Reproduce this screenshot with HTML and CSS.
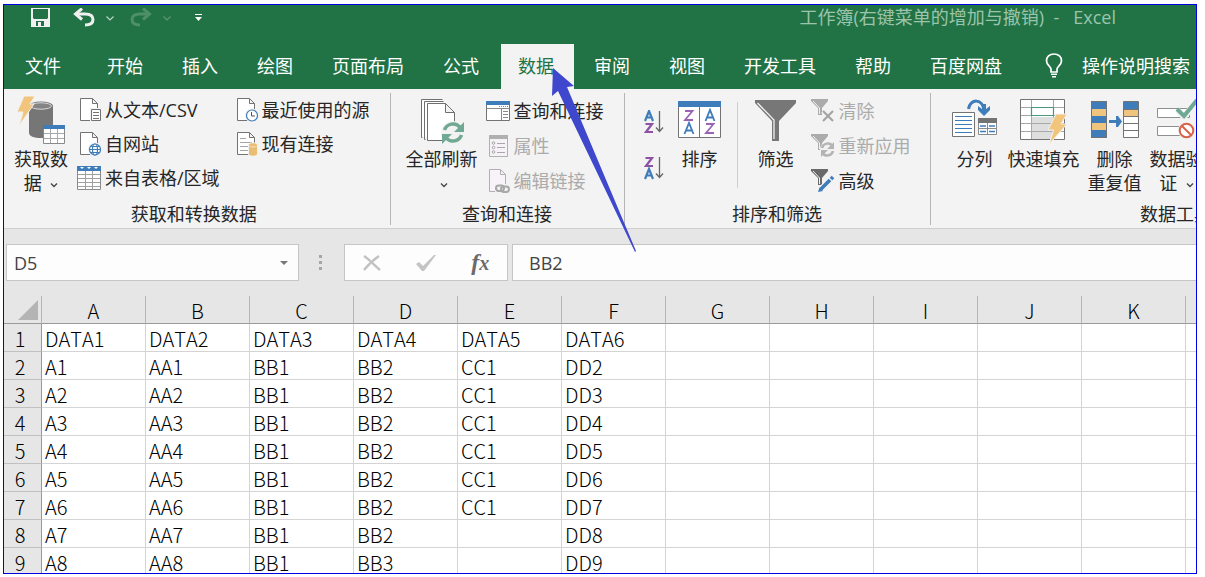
FILE: index.html
```html
<!DOCTYPE html>
<html lang="zh-CN">
<head>
<meta charset="utf-8">
<title>工作簿(右键菜单的增加与撤销) - Excel</title>
<link rel="stylesheet" href="styles.css">
</head>
<body>
<div class="window">
  <header class="top">
    <div class="titlebar">
      <button class="qa save" aria-label="保存"><svg width="20" height="20" viewBox="0 0 20 20"><path fill="#f0f0f0" fill-rule="evenodd" d="M0 0h19v19H0zM2 1v9l1 1h13l1-1V1zM5 13v5h2v-4h3v4h3v-5z"/></svg></button>
      <button class="qa undo" aria-label="撤销"><svg width="22" height="20" viewBox="0 0 22 20"><path fill="none" stroke="#f0f0f0" stroke-width="3" d="M3 6h9c5 0 8 2 8 5.500S17 17 12 17"/><path fill="none" stroke="#f0f0f0" stroke-width="3" d="M9 0.500L2.500 6 9 11.500"/></svg></button>
      <button class="qa chev" aria-label="撤销列表"><svg width="8" height="5" viewBox="0 0 8 5"><path fill="none" stroke="#b9d3c4" stroke-width="1.200" d="M.5.500L4 4 7.500.500"/></svg></button>
      <button class="qa redo" aria-label="恢复"><svg width="22" height="20" viewBox="0 0 22 20"><g fill="none" stroke="#4e8f69" stroke-width="3"><path d="M19 6h-9c-5 0-8 2-8 5.500S5 17 10 17"/><path d="M13 .5L19.500 6 13 11.500"/></g></svg></button>
      <button class="qa chev" aria-label="恢复列表"><svg width="8" height="5" viewBox="0 0 8 5"><path fill="none" stroke="#5b9875" stroke-width="1.200" d="M.5.500L4 4 7.500.500"/></svg></button>
      <button class="qa custom" aria-label="自定义快速访问工具栏"><svg width="8" height="8" viewBox="0 0 8 8"><path fill="#fff" d="M0 0h7v1H0zM0 3h7L3.500 7z"/></svg></button>
      <span class="title">工作簿(右键菜单的增加与撤销)&nbsp; -&nbsp;&nbsp; Excel</span>
    </div>
    <nav class="tabs">
      <button class="tab file">文件</button>
      <button class="tab">开始</button>
      <button class="tab">插入</button>
      <button class="tab">绘图</button>
      <button class="tab">页面布局</button>
      <button class="tab">公式</button>
      <button class="tab active">数据</button>
      <button class="tab">审阅</button>
      <button class="tab">视图</button>
      <button class="tab">开发工具</button>
      <button class="tab">帮助</button>
      <button class="tab">百度网盘</button>
      <button class="tell"><svg width="18" height="25" viewBox="0 0 18 25"><path fill="none" stroke="#fff" stroke-width="1.700" d="M6 19v-3C5.500 13 1.500 12 1.500 7.700 1.500 4 4.500 1 9 1s7.500 3 7.500 6.700c0 4.300-4 5.300-4.500 8.300v3z"/><path fill="#fff" d="M6 20.500h6V22H6zM7 23h4v1.500H7z"/></svg>操作说明搜索</button>
    </nav>
  </header>

  <section class="ribbon">
    <div class="group g-get">
      <div class="tools">
        <button class="big"><span class="pic"><svg width="48" height="48" viewBox="0 0 48 48"><path fill="#767676" d="M12 10v27c0 3 5 5 12 5s12-2 12-5V10z"/><ellipse cx="24" cy="10" rx="12" ry="4.500" fill="#767676"/><ellipse cx="24" cy="10" rx="10.500" ry="3.200" fill="#848484" stroke="#d8d8d8"/><path fill="#f2c57c" stroke="#f2f2f2" d="M7 0h11l-5 8h4L2 30l4-14H0z"/><path fill="#fff" stroke="#8a8a8a" d="M26.500 29.500h21v18h-21z"/><path fill="#3f7cba" d="M26 29h22v4H26z"/><path stroke="#a8a8a8" d="M33.500 33v14M40.500 33v14M27 37.500h20M27 42.500h20"/></svg></span>获取数<br>据 <svg class="dn" width="8" height="5" viewBox="0 0 8 5"><path d="M1 .5l3 3 3-3"/></svg></button>
        <div class="stack">
          <button class="small"><svg width="24" height="24" viewBox="0 0 24 24"><path fill="#fff" stroke="#737373" d="M3.500.500h12l5 5v17h-17zM15.500.500v5h5"/><path fill="#fff" stroke="#f2f2f2" stroke-width="3" d="M14.500 11.500h9v11h-9z"/><path fill="#fff" stroke="#737373" d="M14.500 11.500h9v11h-9zM16 14.500h6M16 17.500h6M16 20.500h6"/></svg>从文本/CSV</button>
          <button class="small"><svg width="24" height="24" viewBox="0 0 24 24"><path fill="#fff" stroke="#737373" d="M3.500.500h12l5 5v17h-17zM15.500.500v5h5"/><circle cx="18" cy="17.500" r="7" fill="#f2f2f2"/><g fill="#fff" stroke="#3f7cba" stroke-width="1.200"><circle cx="18" cy="17.500" r="5.500"/><ellipse cx="18" cy="17.500" rx="2.500" ry="5.500"/><path d="M12.500 17.500h11M13.500 14.500h9M13.500 20.500h9"/></g></svg>自网站</button>
          <button class="small"><svg width="24" height="24" viewBox="0 0 24 24"><path fill="#fff" stroke="#8a8a8a" d="M.5.500h23v23H.5z"/><path fill="#3f7cba" d="M0 0h24v5H0z"/><path fill="#fff" d="M3 1h4L5 3zM10 1h4l-2 2zM17 1h4l-2 2z"/><path stroke="#a0a0a0" d="M8.500 5v18M15.500 5v18M1 8.500h22M1 12.500h22M1 16.500h22M1 20.500h22"/></svg>来自表格/区域</button>
        </div>
        <div class="stack">
          <button class="small"><svg width="24" height="24" viewBox="0 0 24 24"><path fill="#fff" stroke="#737373" d="M3.500.500h12l5 5v17h-17zM15.500.500v5h5"/><circle cx="18" cy="17.500" r="7" fill="#f2f2f2"/><circle cx="18" cy="17.500" r="5.500" fill="#fff" stroke="#3f7cba" stroke-width="1.200"/><path fill="none" stroke="#555" d="M17.500 14v4H21"/></svg>最近使用的源</button>
          <button class="small"><svg width="24" height="24" viewBox="0 0 24 24"><path fill="#fff" stroke="#737373" d="M3.500.500h12l5 5v17h-17zM15.500.500v5h5"/><path stroke="#a5a5a5" d="M6 6.500h6M6 10.500h12M6 14.500h9M6 18.500h9"/><path fill="#eabd74" stroke="#f2f2f2" d="M14.500 13c0-3 9-3 9 0v9c0 3-9 3-9 0z"/><path fill="none" stroke="#f8e3c0" d="M15 13.500c1 2 7 2 8 0"/></svg>现有连接</button>
        </div>
      </div>
      <div class="caption">获取和转换数据</div>
    </div>

    <div class="group g-query">
      <div class="tools">
        <button class="big"><span class="pic"><svg width="46" height="48" viewBox="0 0 46 48"><g fill="#fff" stroke="#6f6f6f"><path d="M2.500 41V3.500h20V41z" stroke="none"/><path fill="none" d="M3.500 41.500h-1v-38h21M6.500 43.500h-1V5.500h19"/><path d="M8.500 7.500h18l9 9v28h-27zM26.500 7.500v9h9"/></g><circle cx="34" cy="37" r="12" fill="#f2f2f2"/><g fill="none" stroke="#6fa893" stroke-width="3.500"><path d="M25.500 34c2-6 11-9 16-2"/><path d="M42.500 39c-2 6-11 9-16 2"/></g><path fill="#6fa893" d="M45 26v10H35zM23 48V38h10z"/></svg></span>全部刷新<br><svg class="dn" width="8" height="5" viewBox="0 0 8 5"><path d="M1 .5l3 3 3-3"/></svg></button>
        <div class="stack tall">
          <button class="small"><svg width="24" height="24" viewBox="0 0 24 24"><path fill="#fff" stroke="#737373" d="M.5 2.500h23v19H.5z"/><path fill="#3f7cba" d="M0 2h24v4H0z"/><path fill="none" stroke="#8a8a8a" d="M1 9.500h22M15.500 10v11M17 12.500h5M17 15.500h5M17 18.500h5"/><path stroke="#8a8a8a" stroke-dasharray="1 1" d="M13 7.500h9"/></svg>查询和连接</button>
          <button class="small off"><svg width="24" height="24" viewBox="0 0 24 24"><path fill="#f6f2f7" stroke="#b0b0b0" d="M3.500 1.500h18v21h-18z"/><path fill="#b0b0b0" d="M3 1h19v4H3z"/><g fill="none" stroke="#a8a8a8"><circle cx="7.500" cy="9" r="1.300"/><circle cx="7.500" cy="13.500" r="1.300"/><circle cx="7.500" cy="18" r="1.300"/><path d="M11 9.500h8M11 13.500h8M11 18.500h8"/></g></svg>属性</button>
          <button class="small off"><svg width="24" height="24" viewBox="0 0 24 24"><path fill="#f8f3f8" stroke="#b0b0b0" d="M3.500.500h11l5 5v17h-16zM14.500.500v5h5"/><path fill="#f2f2f2" d="M9 15h15v9H9z"/><g fill="none" stroke="#a8a8a8" stroke-width="2"><rect x="10" y="16.500" width="8" height="5.500" rx="2.700"/><rect x="15" y="17.500" width="8" height="5.500" rx="2.700"/></g></svg>编辑链接</button>
        </div>
      </div>
      <div class="caption">查询和连接</div>
    </div>

    <div class="group g-sort">
      <div class="tools">
        <div class="orders">
          <button class="order" aria-label="升序"><svg width="20" height="24" viewBox="0 0 20 24"><g fill="none" stroke-width="2.200"><path stroke="#3f7cba" d="M1 11L5 1l4 10M2.500 7.500h5"/><path stroke="#8e51a6" d="M1.500 14H8L2 22h7"/></g><path fill="none" stroke="#666" stroke-width="1.300" d="M15.500 1v20M12 17.500l3.500 4 3.500-4"/></svg></button>
          <button class="order" aria-label="降序"><svg width="20" height="24" viewBox="0 0 20 24"><g fill="none" stroke-width="2.200"><path stroke="#8e51a6" d="M1.500 2H8L2 10h7"/><path stroke="#3f7cba" d="M1 23L5 13l4 10M2.500 19.500h5"/></g><path fill="none" stroke="#666" stroke-width="1.300" d="M15.500 1v20M12 17.500l3.500 4 3.500-4"/></svg></button>
        </div>
        <button class="big"><span class="pic"><svg width="44" height="48" viewBox="0 0 44 48"><path fill="#fff" stroke="#737373" d="M.5 5.500h42v36H.5zM21.500 10v31"/><path fill="#3f7cba" d="M0 5h43v6H0z"/><g fill="none" stroke-width="1.800"><path stroke="#9a63b4" d="M7 15h7.500L7 24h8M28 28h7.500L28 37h8"/><path stroke="#3f7cba" d="M6.500 38l4.500-11 4.500 11M8 34.500h6M27.500 25l4.500-11 4.500 11M29 21.500h6"/></g></svg></span>排序</button>
        <div class="rule"></div>
        <button class="big"><span class="pic"><svg width="42" height="48" viewBox="0 0 42 48"><path fill="#777" d="M0 4h41v3L24 25v20h-7V25L0 7z"/><path fill="none" stroke="#f2f2f2" stroke-width="1.300" d="M2.500 7L19 24v19"/></svg></span>筛选</button>
        <div class="stack tall">
          <button class="small off"><svg width="24" height="24" viewBox="0 0 24 24"><path fill="#ababab" d="M0 0h17v2l-6 7v7H7V9L0 2z"/><path fill="none" stroke="#f2f2f2" d="M2 2l6.500 7v6"/><path stroke="#f2f2f2" stroke-width="5" d="M12 12l10 10M22 12L12 22"/><path stroke="#a2a2a2" stroke-width="2" d="M12 12l10 10M22 12L12 22"/></svg>清除</button>
          <button class="small off"><svg width="24" height="24" viewBox="0 0 24 24"><path fill="#ababab" d="M0 0h17v2l-6 7v7H7V9L0 2z"/><path fill="none" stroke="#f2f2f2" d="M2 2l6.500 7v6"/><circle cx="16.500" cy="15.500" r="7.500" fill="#f2f2f2"/><path fill="none" stroke="#b4b4b4" stroke-width="2.500" d="M11 14c1-5 8-6 10.500-2M22 17c-1 5-8 6-10.500 2"/><path fill="#b4b4b4" d="M23 8v7h-7zM10 23v-7h7z"/></svg>重新应用</button>
          <button class="small"><svg width="24" height="24" viewBox="0 0 24 24"><path fill="#6a6a6a" d="M0 0h17v2l-6 7v7H7V9L0 2z"/><path fill="none" stroke="#f2f2f2" d="M2 2l6.500 7v6"/><path stroke="#f2f2f2" stroke-width="6" d="M9 21L21 9"/><path stroke="#3f7cba" stroke-width="3.600" d="M9.500 20.500L19 11M20 10l2-2"/><path fill="#3f7cba" d="M7 23l1.500-4.500L12 22z"/></svg>高级</button>
        </div>
      </div>
      <div class="caption">排序和筛选</div>
    </div>

    <div class="group g-data">
      <div class="tools">
        <button class="big"><span class="pic"><svg width="46" height="48" viewBox="0 0 46 48"><path fill="#fff" stroke="#737373" d="M.5 16.500h22v24H.5z"/><path stroke="#3f7cba" stroke-width="1.200" d="M3 20.500h17M3 24.500h17M3 28.500h17M3 32.500h17M3 36.500h17"/><path fill="#fff" stroke="#8a8a8a" d="M26.500 22.500h18v16h-18z"/><path fill="#737373" d="M26 22h19v5H26z"/><path stroke="#8a8a8a" d="M35.500 27v11M27 32.500h18"/><path stroke="#3f7cba" stroke-width="1.300" d="M28 30h6M37 30h6M28 35.500h6M37 35.500h6"/><path fill="none" stroke="#3f7cba" stroke-width="3" d="M16.500 13c1-10 15-12 15.500 3"/><path fill="#3f7cba" d="M26 10l4 3V8h4v5l4-3v4l-6 6-6-6z"/></svg></span>分列</button>
        <button class="big"><span class="pic"><svg width="48" height="48" viewBox="0 0 48 48"><path fill="#fff" stroke="#737373" d="M.5 3.500h44v40H.5z"/><path fill="#dedede" d="M11 21h23v22H11z"/><path stroke="#a8a8a8" d="M11.500 4v39M33.500 4v39M1 11.500h43M1 19.500h43M1 27.500h43M1 35.500h43"/><path fill="#fff" stroke="#4b977c" stroke-width="1.200" d="M11.500 11.500h22v8h-22z"/><path fill="#f2c57c" stroke="#f2f2f2" d="M36 18h11l-6 10h6L29 48.500 33.500 34H28z"/></svg></span>快速填充</button>
        <button class="big"><span class="pic"><svg width="50" height="48" viewBox="0 0 50 48"><path fill="#3f7cba" d="M1 5h16v37H1z"/><path fill="#eec47e" d="M1 13h16v7H1zM1 27h16v7H1z"/><path fill="#fff" stroke="#737373" d="M33.500 5.500h15v36h-15z"/><path fill="#3f7cba" d="M34 6h14v7H34z"/><path fill="#eec47e" d="M34 13h14v7H34z"/><path fill="none" stroke="#737373" d="M1.500 5.500h15v36h-15zM34 13.500h14M34 20.500h14M34 27.500h14M34 34.500h14"/><path fill="#3f7cba" d="M19 24h7v-4h2l4 5.500-4 5.500h-2v-4h-7z"/></svg></span>删除<br>重复值</button>
        <button class="big"><span class="pic"><svg width="40" height="48" viewBox="0 0 40 48"><path fill="#fff" stroke="#8f8f8f" d="M.5 12.500h32v9H.5zM.5 30.500h32v9H.5z"/><path fill="none" stroke="#f2f2f2" stroke-width="6" d="M20 14l7 7L40 5"/><path fill="none" stroke="#6fa893" stroke-width="4" d="M20 13l7 7L40 4"/><circle cx="29.500" cy="34.500" r="8.500" fill="#f2f2f2"/><circle cx="29.500" cy="34.500" r="6.800" fill="#fff" stroke="#d9634a" stroke-width="2"/><path stroke="#d9634a" stroke-width="2" d="M25 30l9 9"/></svg></span>数据验<br>证 <svg class="dn" width="8" height="5" viewBox="0 0 8 5"><path d="M1 .5l3 3 3-3"/></svg></button>
      </div>
      <div class="caption">数据工具</div>
    </div>
  </section>

  <section class="formula">
    <div class="namebox"><input type="text" value="D5" aria-label="名称框"><button aria-label="名称列表"><svg width="8" height="4" viewBox="0 0 8 4"><path fill="#777" d="M0 0h8L4 4z"/></svg></button></div>
    <svg class="grip" width="3" height="15" viewBox="0 0 3 15"><path fill="#a6a6a6" d="M0 0h3v3H0zM0 6h3v3H0zM0 12h3v3H0z"/></svg>
    <div class="actions">
      <button aria-label="取消"><svg width="18" height="16" viewBox="0 0 18 16"><path fill="none" stroke="#c2c2c2" stroke-width="2.400" d="M1 1c5 3 10 9 16 14M16 1C10 5 5 10 1 15"/></svg></button>
      <button aria-label="输入"><svg width="20" height="16" viewBox="0 0 20 16"><path fill="#c4c4c4" d="M0 9l3-2 4 4L18 0h2L8 16H6z"/></svg></button>
      <button class="fx" aria-label="插入函数">f<span>x</span></button>
    </div>
    <input class="entry" type="text" value="BB2" aria-label="编辑栏">
  </section>

  <table class="sheet">
    <colgroup><col class="c0"><col><col><col><col><col><col><col><col><col><col><col><col></colgroup>
    <thead><tr><th class="corner"><svg width="20" height="20" viewBox="0 0 20 20"><path fill="#b4b4b4" d="M20 0v20H0z"/></svg></th><th>A</th><th>B</th><th>C</th><th>D</th><th>E</th><th>F</th><th>G</th><th>H</th><th>I</th><th>J</th><th>K</th><th></th></tr></thead>
    <tbody>
      <tr><th>1</th><td>DATA1</td><td>DATA2</td><td>DATA3</td><td>DATA4</td><td>DATA5</td><td>DATA6</td><td></td><td></td><td></td><td></td><td></td><td></td></tr>
      <tr><th>2</th><td>A1</td><td>AA1</td><td>BB1</td><td>BB2</td><td>CC1</td><td>DD2</td><td></td><td></td><td></td><td></td><td></td><td></td></tr>
      <tr><th>3</th><td>A2</td><td>AA2</td><td>BB1</td><td>BB2</td><td>CC1</td><td>DD3</td><td></td><td></td><td></td><td></td><td></td><td></td></tr>
      <tr><th>4</th><td>A3</td><td>AA3</td><td>BB1</td><td>BB2</td><td>CC1</td><td>DD4</td><td></td><td></td><td></td><td></td><td></td><td></td></tr>
      <tr><th>5</th><td>A4</td><td>AA4</td><td>BB1</td><td>BB2</td><td>CC1</td><td>DD5</td><td></td><td></td><td></td><td></td><td></td><td></td></tr>
      <tr><th>6</th><td>A5</td><td>AA5</td><td>BB1</td><td>BB2</td><td>CC1</td><td>DD6</td><td></td><td></td><td></td><td></td><td></td><td></td></tr>
      <tr><th>7</th><td>A6</td><td>AA6</td><td>BB1</td><td>BB2</td><td>CC1</td><td>DD7</td><td></td><td></td><td></td><td></td><td></td><td></td></tr>
      <tr><th>8</th><td>A7</td><td>AA7</td><td>BB1</td><td>BB2</td><td></td><td>DD8</td><td></td><td></td><td></td><td></td><td></td><td></td></tr>
      <tr><th>9</th><td>A8</td><td>AA8</td><td>BB1</td><td>BB3</td><td></td><td>DD9</td><td></td><td></td><td></td><td></td><td></td><td></td></tr>
    </tbody>
  </table>
  <svg class="pointer" width="86" height="186" viewBox="0 0 86 186"><path fill="#3f48cc" d="M1 1l21 18-7 1 69 164-1 1L6 24l-6 5z"/></svg>
</div>
</body>
</html>
```
FILE: styles.css
```css
* { box-sizing: border-box; }
body {
  margin: 0;
  padding: 4px 8px 3px 3px;
  height: 100vh;
  display: flex;
  background: #fff;
  font: 18px/24px "Open Sans", "Noto Sans CJK SC", sans-serif;
  color: #262626;
}
button, input { font: inherit; color: inherit; border: 0; padding: 0; margin: 0; background: none; }
svg { display: block; flex: none; }
.window {
  position: relative;
  flex: 1;
  min-width: 0;
  overflow: hidden;
  border: 1px solid #0000e6;
  background: #e6e6e6;
}

.top { background: #217346; color: #fff; white-space: nowrap; }
.titlebar { display: flex; align-items: center; height: 26px; margin-bottom: 13px; padding: 0 80px 0 27px; }
.undo { margin-left: 22px; }
.chev { margin: 0 0 0 11px; }
.redo { margin-left: 16px; }
.custom { margin-left: 24px; }
.title { margin-left: auto; padding-bottom: 3px; color: #9bc4ab; }
.tabs { display: flex; gap: 1px; height: 45px; }
.tab { padding: 0 19px 2px; flex: none; }
.tab.file { padding: 0 21px 2px; margin-right: 5px; }
.tab.active { padding: 0 20px 2px 17px; margin-left: 2px; background: #f3f3f3; color: #217346; }
.tell { display: flex; align-items: center; gap: 19px; margin-left: 23px; padding-bottom: 2px; flex: none; }

.ribbon { display: flex; padding: 4px 0 3px; background: #f3f3f3; border-bottom: 1px solid #cfcfcf; overflow: hidden; white-space: nowrap; }
.group { flex: none; border-right: 1px solid #b5b5b5; }
.tools { display: flex; align-items: flex-start; height: 110px; }
.caption { text-align: center; line-height: 22px; }
.big { flex: none; line-height: 24px; text-align: center; }
.pic { display: flex; justify-content: center; height: 54px; padding-top: 3px; }
.dn { display: inline-block; vertical-align: middle; margin-left: 4px; }
.dn path { fill: none; stroke: #444; stroke-width: 1.3; }
.stack { display: flex; flex-direction: column; }
.small { display: flex; align-items: center; gap: 4px; height: 34px; }
.tall .small { height: 35px; }
.off { color: #ababab; }
.g-get .tools { padding: 0 20px 0 10px; }
.g-get .big { margin-right: 9px; }
.g-get .stack + .stack { margin-left: 14px; }
.g-get .caption { padding-right: 6px; }
.g-query .tools { padding: 0 20px 0 15px; gap: 8px; }
.g-sort .tools { padding: 0 19px; }
.orders { display: flex; flex-direction: column; gap: 22px; padding-top: 17px; margin-right: 14px; }
.rule { width: 1px; height: 86px; margin: 9px 17px 0 15px; background: #cfcfcf; }
.g-sort .stack { margin-left: 14px; }
.g-data { border: 0; }
.g-data .tools { padding: 0 20px 0 21px; gap: 8px; }
.g-data .big:first-child { margin-right: 2px; }
.g-data .caption { padding-left: 198px; }

.formula { display: flex; align-items: center; height: 67px; padding-left: 2px; }
.namebox, .actions, .entry { height: 37px; background: #fdfdfd; border: 1px solid #c6c6c6; }
.namebox { display: flex; width: 293px; flex: none; color: #444; }
.namebox input { flex: 1; min-width: 0; padding-left: 7px; }
.namebox button { width: 18px; }
.grip { margin: 0 22px 0 20px; }
.actions { display: flex; width: 164px; flex: none; align-items: center; justify-content: space-around; }
.fx { font: italic bold 24px/24px "Liberation Serif", serif; color: #6b6b6b; }
.fx span { font-size: 20px; }
.entry { flex: 1; min-width: 0; margin-left: 4px; padding-left: 16px; border-right: 0; color: #444; }

.sheet {
  table-layout: fixed;
  width: 1286px;
  border-collapse: separate;
  border-spacing: 0;
  background: #fff;
  font: 300 20px/25px "Noto Sans CJK SC", sans-serif;
  font-kerning: none;
  color: #000;
}
.c0 { width: 38px; }
.sheet tr { height: 28px; }
.sheet td, .sheet th { padding: 2px 0 0 3px; border-right: 1px solid #d4d4d4; border-bottom: 1px solid #d4d4d4; }
.sheet th { font-weight: 300; background: #e6e6e6; padding-left: 0; text-align: center; }
.sheet thead th { border-bottom-color: #999; border-right-color: #b5b5b5; }
.sheet tbody th { border-right-color: #999; border-bottom-color: #c0c0c0; padding-right: 5px; }
.sheet .corner { padding: 0 3px 0 14px; }
.pointer { position: absolute; left: 548px; top: 62px; }
```
